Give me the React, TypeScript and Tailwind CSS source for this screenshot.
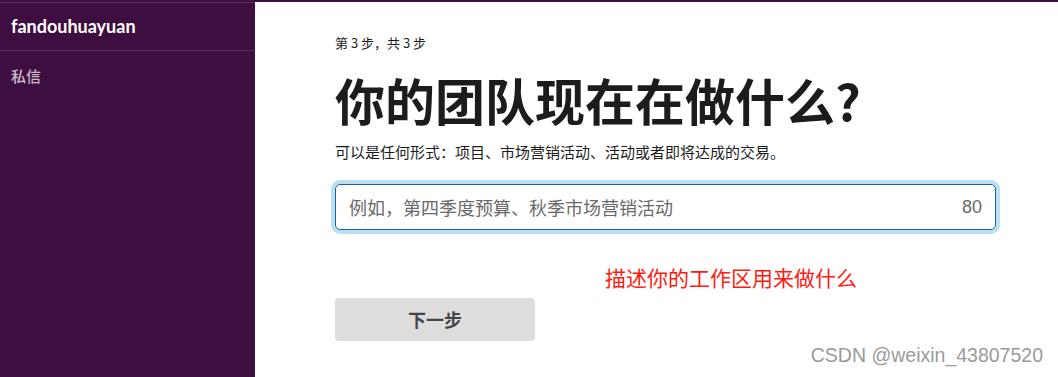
export default function App() {
  return (
    <div className="w-[1058px] h-[377px] bg-white flex flex-col overflow-hidden relative font-['Lato','Noto_Sans_CJK_SC',sans-serif]">
      {/* top strip */}
      <div className="h-[2px] bg-[#3f0e40]" />

      <div className="flex flex-1">
        {/* sidebar */}
        <aside className="w-[255px] bg-[#3f0e40] flex flex-col border-t border-[#5a2b5b]">
          <div className="h-[48px] flex items-center px-[11px] border-b border-[#5a2b5b]">
            <span className="text-white text-[18px] font-bold">fandouhuayuan</span>
          </div>
          <div className="px-[11px] pt-[15px] text-[15px] leading-[20px] font-medium text-[#cbbccb] font-['Noto_Sans_CJK_SC',sans-serif]">
            私信
          </div>
        </aside>

        {/* main */}
        <main className="flex-1 flex flex-col pl-[80px] font-['Noto_Sans_CJK_SC',sans-serif] text-[#1d1c1d]">
          <p className="pt-[32px] text-[13px] leading-[18px]">第 3 步，共 3 步</p>
          <h1 className="mt-[17px] text-[50px] leading-[60px] font-bold">你的团队现在在做什么?</h1>
          <p className="mt-[13px] text-[15px] leading-[20px]">可以是任何形式：项目、市场营销活动、活动或者即将达成的交易。</p>

          <div className="mt-[22px] w-[661px] h-[46px] rounded-[5px] border border-[#1264a3] ring-4 ring-[#bde0f1] flex items-center justify-between px-[13px] text-[18px] text-[#696969]">
            <span>例如，第四季度预算、秋季市场营销活动</span>
            <span className="font-['Liberation_Sans',sans-serif] text-[18px]">80</span>
          </div>

          <div className="mt-[33px] pl-[270px] text-[21px] leading-[28px] text-[#ff1a0f]">描述你的工作区用来做什么</div>

          <button className="mt-[7px] w-[200px] h-[43px] rounded-[4px] bg-[#dddddd] text-[#454545] text-[18px] font-bold flex items-center justify-center">
            下一步
          </button>
        </main>
      </div>

      <span className="absolute right-[15px] bottom-[7px] text-[19.5px] text-[#9a9a9a] font-['Liberation_Sans',sans-serif] [text-shadow:0_0_1px_#fff]">
        CSDN @weixin_43807520
      </span>
    </div>
  );
}
